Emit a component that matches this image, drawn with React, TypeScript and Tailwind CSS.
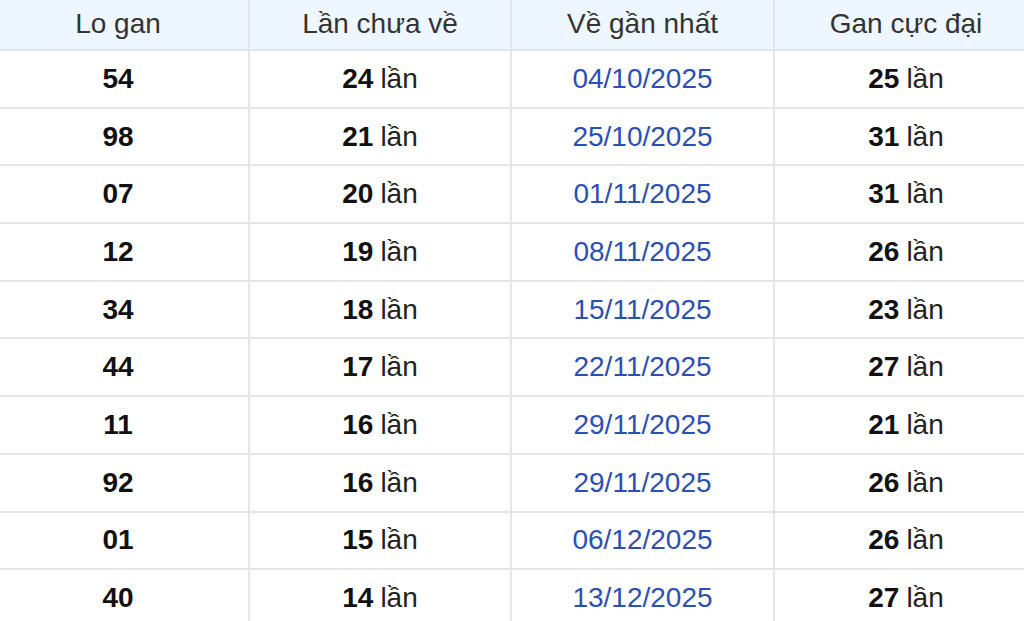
import React from "react";

interface Row {
  lo: string;
  chuaVe: number;
  ganNhat: string;
  cucDai: number;
}

const rows: Row[] = [
  { lo: "54", chuaVe: 24, ganNhat: "04/10/2025", cucDai: 25 },
  { lo: "98", chuaVe: 21, ganNhat: "25/10/2025", cucDai: 31 },
  { lo: "07", chuaVe: 20, ganNhat: "01/11/2025", cucDai: 31 },
  { lo: "12", chuaVe: 19, ganNhat: "08/11/2025", cucDai: 26 },
  { lo: "34", chuaVe: 18, ganNhat: "15/11/2025", cucDai: 23 },
  { lo: "44", chuaVe: 17, ganNhat: "22/11/2025", cucDai: 27 },
  { lo: "11", chuaVe: 16, ganNhat: "29/11/2025", cucDai: 21 },
  { lo: "92", chuaVe: 16, ganNhat: "29/11/2025", cucDai: 26 },
  { lo: "01", chuaVe: 15, ganNhat: "06/12/2025", cucDai: 26 },
  { lo: "40", chuaVe: 14, ganNhat: "13/12/2025", cucDai: 27 },
];

const headers = ["Lo gan", "Lần chưa về", "Về gần nhất", "Gan cực đại"];

export default function App() {
  return (
    <div className="w-[1024px] h-[621px] overflow-hidden bg-white font-['Liberation_Sans',Arial,sans-serif] text-[28px]">
      {/* table is cropped on both sides in the screenshot */}
      <div className="grid grid-cols-[262px_262px_263px_262px] ml-[-12px] w-[1049px]">
        {headers.map((h, i) => (
          <div
            key={h}
            className={`h-[51px] pb-[2px] flex items-center justify-center bg-[#eef6ff] text-[#333] border-b-2 border-[#e3e5e8] ${
              i < 3 ? "border-r-2" : ""
            }`}
          >
            {h}
          </div>
        ))}

        {rows.map((r) => (
          <React.Fragment key={r.lo + r.ganNhat}>
            <div className="h-[57.7px] flex items-center justify-center font-bold text-[#111] border-b-2 border-r-2 border-[#e5e5e5]">
              {r.lo}
            </div>
            <div className="h-[57.7px] flex items-center justify-center text-[#222] border-b-2 border-r-2 border-[#e5e5e5]">
              <b className="text-[#111] mr-[7px]">{r.chuaVe}</b>lần
            </div>
            <div className="h-[57.7px] flex items-center justify-center text-[#2c4fb3] border-b-2 border-r-2 border-[#e5e5e5]">
              {r.ganNhat}
            </div>
            <div className="h-[57.7px] flex items-center justify-center text-[#222] border-b-2 border-[#e5e5e5]">
              <b className="text-[#111] mr-[7px]">{r.cucDai}</b>lần
            </div>
          </React.Fragment>
        ))}
      </div>
    </div>
  );
}
